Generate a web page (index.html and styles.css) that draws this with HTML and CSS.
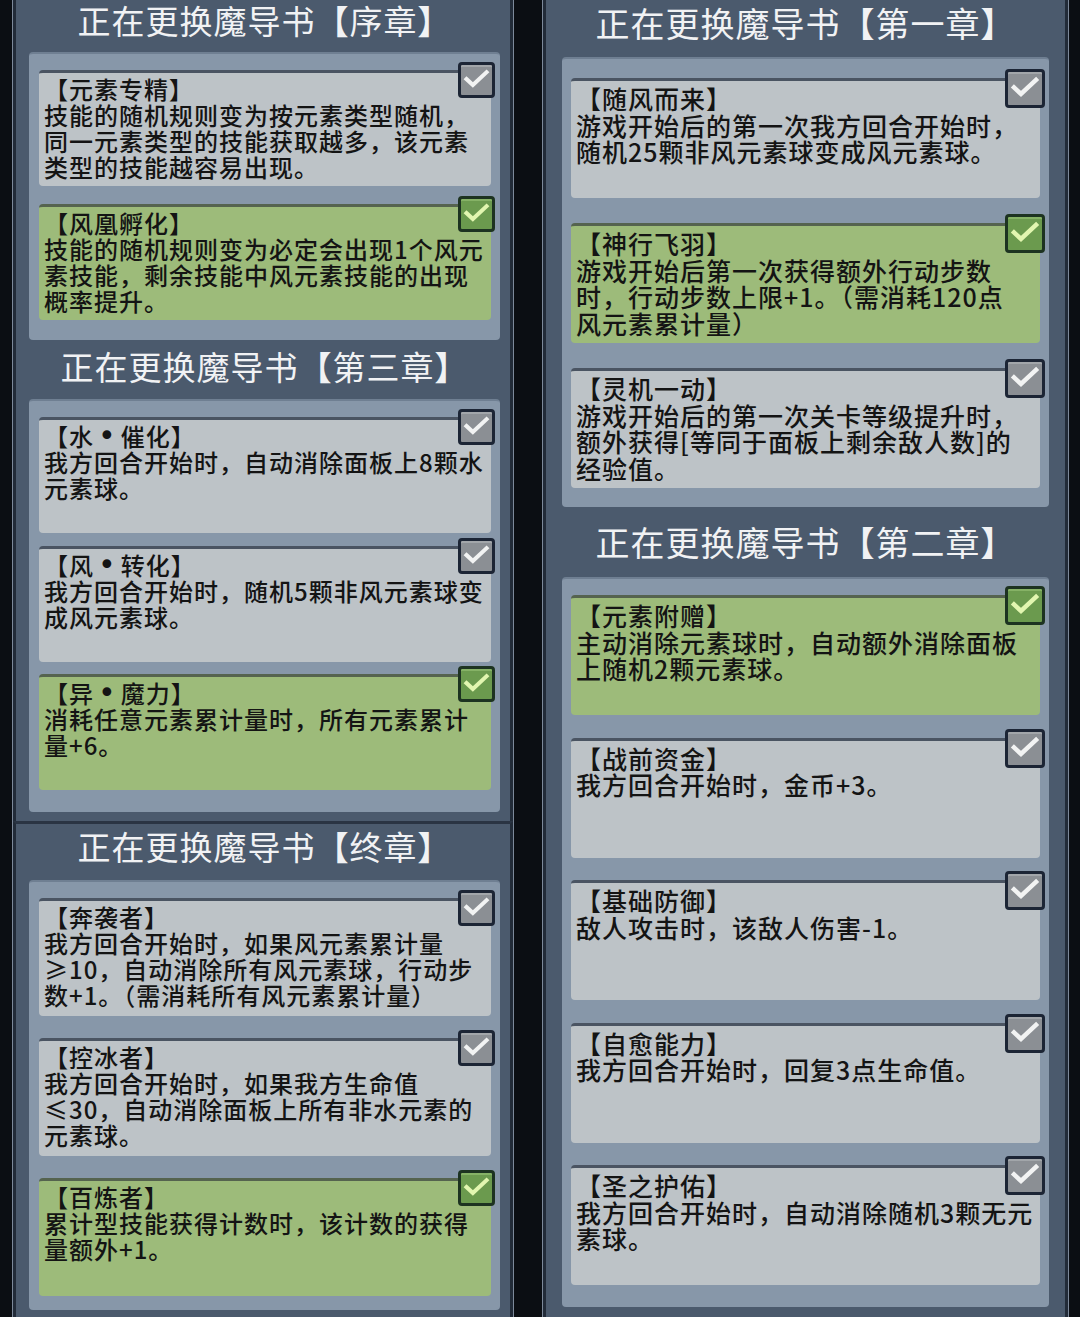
FILE: index.html
```html
<!DOCTYPE html>
<html lang="zh-CN">
<head>
<meta charset="utf-8">
<title>魔导书</title>
<link rel="stylesheet" href="styles.css">
</head>
<body>
<div class="page">
  <div class="col col-left">
    <section class="panel panel-a">
      <h2 class="title t-l1">正在更换魔导书<span class="br">【</span>序章<span class="br">】</span></h2>
      <div class="group g-l1">
        <div class="card gray">
          <span class="chk"><svg viewBox="0 0 34 33"><path d="M6 15.5 L13 22 L28 8"/></svg></span>
          <span class="ln">【元素专精】</span><span class="ln">技能的随机规则变为按元素类型随机，</span><span class="ln">同一元素类型的技能获取越多，该元素</span><span class="ln">类型的技能越容易出现。</span>
        </div>
        <div class="card green">
          <span class="chk"><svg viewBox="0 0 34 33"><path d="M6 15.5 L13 22 L28 8"/></svg></span>
          <span class="ln">【风凰孵化】</span><span class="ln">技能的随机规则变为必定会出现1个风元</span><span class="ln">素技能，剩余技能中风元素技能的出现</span><span class="ln">概率提升。</span>
        </div>
      </div>
      <h2 class="title t-l2">正在更换魔导书<span class="br">【</span>第三章<span class="br">】</span></h2>
      <div class="group g-l2">
        <div class="card gray">
          <span class="chk"><svg viewBox="0 0 34 33"><path d="M6 15.5 L13 22 L28 8"/></svg></span>
          <span class="ln">【水<span class="dot">•</span>催化】</span><span class="ln">我方回合开始时，自动消除面板上8颗水</span><span class="ln">元素球。</span>
        </div>
        <div class="card gray">
          <span class="chk"><svg viewBox="0 0 34 33"><path d="M6 15.5 L13 22 L28 8"/></svg></span>
          <span class="ln">【风<span class="dot">•</span>转化】</span><span class="ln">我方回合开始时，随机5颗非风元素球变</span><span class="ln">成风元素球。</span>
        </div>
        <div class="card green">
          <span class="chk"><svg viewBox="0 0 34 33"><path d="M6 15.5 L13 22 L28 8"/></svg></span>
          <span class="ln">【异<span class="dot">•</span>魔力】</span><span class="ln">消耗任意元素累计量时，所有元素累计</span><span class="ln">量+6。</span>
        </div>
      </div>
    </section>
    <section class="panel panel-b">
      <h2 class="title t-l3">正在更换魔导书<span class="br">【</span>终章<span class="br">】</span></h2>
      <div class="group g-l3">
        <div class="card gray">
          <span class="chk"><svg viewBox="0 0 34 33"><path d="M6 15.5 L13 22 L28 8"/></svg></span>
          <span class="ln">【奔袭者】</span><span class="ln">我方回合开始时，如果风元素累计量</span><span class="ln">≥10，自动消除所有风元素球，行动步</span><span class="ln">数+1。（需消耗所有风元素累计量）</span>
        </div>
        <div class="card gray">
          <span class="chk"><svg viewBox="0 0 34 33"><path d="M6 15.5 L13 22 L28 8"/></svg></span>
          <span class="ln">【控冰者】</span><span class="ln">我方回合开始时，如果我方生命值</span><span class="ln">≤30，自动消除面板上所有非水元素的</span><span class="ln">元素球。</span>
        </div>
        <div class="card green">
          <span class="chk"><svg viewBox="0 0 34 33"><path d="M6 15.5 L13 22 L28 8"/></svg></span>
          <span class="ln">【百炼者】</span><span class="ln">累计型技能获得计数时，该计数的获得</span><span class="ln">量额外+1。</span>
        </div>
      </div>
    </section>
  </div>

  <div class="col col-right">
    <section class="panel panel-r">
      <h2 class="title t-r1">正在更换魔导书<span class="br">【</span>第一章<span class="br">】</span></h2>
      <div class="group g-r1">
        <div class="card gray">
          <span class="chk"><svg viewBox="0 0 34 33"><path d="M6 15.5 L13 22 L28 8"/></svg></span>
          <span class="ln">【随风而来】</span><span class="ln">游戏开始后的第一次我方回合开始时，</span><span class="ln">随机25颗非风元素球变成风元素球。</span>
        </div>
        <div class="card green">
          <span class="chk"><svg viewBox="0 0 34 33"><path d="M6 15.5 L13 22 L28 8"/></svg></span>
          <span class="ln">【神行飞羽】</span><span class="ln">游戏开始后第一次获得额外行动步数</span><span class="ln">时，行动步数上限+1。（需消耗120点</span><span class="ln">风元素累计量）</span>
        </div>
        <div class="card gray">
          <span class="chk"><svg viewBox="0 0 34 33"><path d="M6 15.5 L13 22 L28 8"/></svg></span>
          <span class="ln">【灵机一动】</span><span class="ln">游戏开始后的第一次关卡等级提升时，</span><span class="ln">额外获得[等同于面板上剩余敌人数]的</span><span class="ln">经验值。</span>
        </div>
      </div>
      <h2 class="title t-r2">正在更换魔导书<span class="br">【</span>第二章<span class="br">】</span></h2>
      <div class="group g-r2">
        <div class="card green">
          <span class="chk"><svg viewBox="0 0 34 33"><path d="M6 15.5 L13 22 L28 8"/></svg></span>
          <span class="ln">【元素附赠】</span><span class="ln">主动消除元素球时，自动额外消除面板</span><span class="ln">上随机2颗元素球。</span>
        </div>
        <div class="card gray">
          <span class="chk"><svg viewBox="0 0 34 33"><path d="M6 15.5 L13 22 L28 8"/></svg></span>
          <span class="ln">【战前资金】</span><span class="ln">我方回合开始时，金币+3。</span>
        </div>
        <div class="card gray">
          <span class="chk"><svg viewBox="0 0 34 33"><path d="M6 15.5 L13 22 L28 8"/></svg></span>
          <span class="ln">【基础防御】</span><span class="ln">敌人攻击时，该敌人伤害-1。</span>
        </div>
        <div class="card gray">
          <span class="chk"><svg viewBox="0 0 34 33"><path d="M6 15.5 L13 22 L28 8"/></svg></span>
          <span class="ln">【自愈能力】</span><span class="ln">我方回合开始时，回复3点生命值。</span>
        </div>
        <div class="card gray">
          <span class="chk"><svg viewBox="0 0 34 33"><path d="M6 15.5 L13 22 L28 8"/></svg></span>
          <span class="ln">【圣之护佑】</span><span class="ln">我方回合开始时，自动消除随机3颗无元</span><span class="ln">素球。</span>
        </div>
      </div>
    </section>
  </div>
</div>
</body>
</html>
```

FILE: styles.css
```css
* { box-sizing: border-box; }
html, body { margin: 0; padding: 0; }
body {
  width: 1080px;
  height: 1317px;
  overflow: hidden;
  background: #0b0e13;
  font-family: "Noto Sans CJK SC", "Noto Sans", sans-serif;
  color: #141414;
}
.page {
  display: flex;
  align-items: flex-start;
  gap: 30px;
  padding-left: 13px;
  height: 1317px;
}
.col { display: flex; flex-direction: column; }
.col-left { width: 500px; }
.col-right { width: 525px; }

.panel {
  background: #4b5a6d;
  border-left: 3px solid #222b38;
  border-right: 3px solid #222b38;
  box-shadow: 1px 0 0 #7d899a, -1px 0 0 #7d899a;
}
.panel-a { height: 821px; padding: 0 10px 0 13px; }
.panel-b { height: 496px; padding: 0 10px 0 13px; border-top: 3px solid #2a3443; }
.panel-r { height: 1317px; padding: 0 16px; }

.title {
  margin: 0;
  display: flex;
  align-items: center;
  justify-content: center;
  color: #f1f2f4;
  font-weight: 400;
  font-size: 33px;
  letter-spacing: 1px;
  white-space: nowrap;
}
.title .br { font-weight: 700; }
.t-l1 { height: 52px; padding-bottom: 12px; }
.t-l2 { height: 59px; padding-bottom: 7px; }
.t-l3 { height: 56px; padding-bottom: 12px; }
.panel-r .title { font-size: 34px; }
.t-r1 { height: 57px; padding-bottom: 13px; }
.t-r2 { height: 70px; padding-bottom: 1px; }

.group {
  display: flex;
  flex-direction: column;
  background: #8797a9;
  border-radius: 4px;
  border-top: 2px solid #6f7f92;
  padding-left: 10px;
  padding-right: 9px;
}
.g-l1 { height: 288px; padding-top: 16px; gap: 18px; }
.g-l2 { height: 413px; padding-top: 16px; gap: 12.5px; }
.g-l3 { height: 430px; padding-top: 16px; gap: 22px; }
.panel-r .group { padding-left: 9px; padding-right: 9px; }
.g-r1 { height: 450px; padding-top: 19px; gap: 25px; }
.g-r2 { height: 730px; padding-top: 16px; gap: 22.5px; }

.card {
  position: relative;
  flex: none;
  border-radius: 4px;
  border-top: 3px solid #4a5462;
  padding: 3px 0 0 5px;
  font-size: 24px;
  line-height: 26px;
  font-weight: 500;
  letter-spacing: 1px;
  white-space: nowrap;
}
.ln { display: block; height: 26px; }
.dot {
  font-family: "DejaVu Sans", sans-serif;
  font-size: 30px;
  margin: 0 4px;
}
.g-l1 .card, .g-l2 .card { height: 116px; }
.g-l3 .card { height: 118px; }
.panel-r .card {
  height: 120px;
  font-size: 25px;
  line-height: 26.5px;
  padding-top: 4px;
}
.panel-r .ln { height: 26.5px; }
.gray { background: #bdc3c7; }
.green { background: #9dbb7a; border-top-color: #55634f; }

.chk {
  position: absolute;
  top: -11px;
  right: -4px;
  width: 37px;
  height: 36px;
  border: 3px solid #1c2535;
  border-radius: 4px;
  background: #8b8f94;
  box-shadow: inset 0 2px 0 #a2a6aa;
  display: block;
}
.panel-r .chk {
  top: -12px;
  right: -5px;
  width: 40px;
  height: 39px;
}
.chk svg { display: block; width: 100%; height: 100%; }
.chk path {
  fill: none;
  stroke: #f2f3f3;
  stroke-width: 4.5;
  stroke-linecap: square;
  stroke-linejoin: miter;
}
.green .chk {
  background: #6b9a4e;
  border-color: #1d3321;
  box-shadow: inset 0 2px 0 #86b266;
}
.green .chk path { stroke: #e2f6b0; }
```
